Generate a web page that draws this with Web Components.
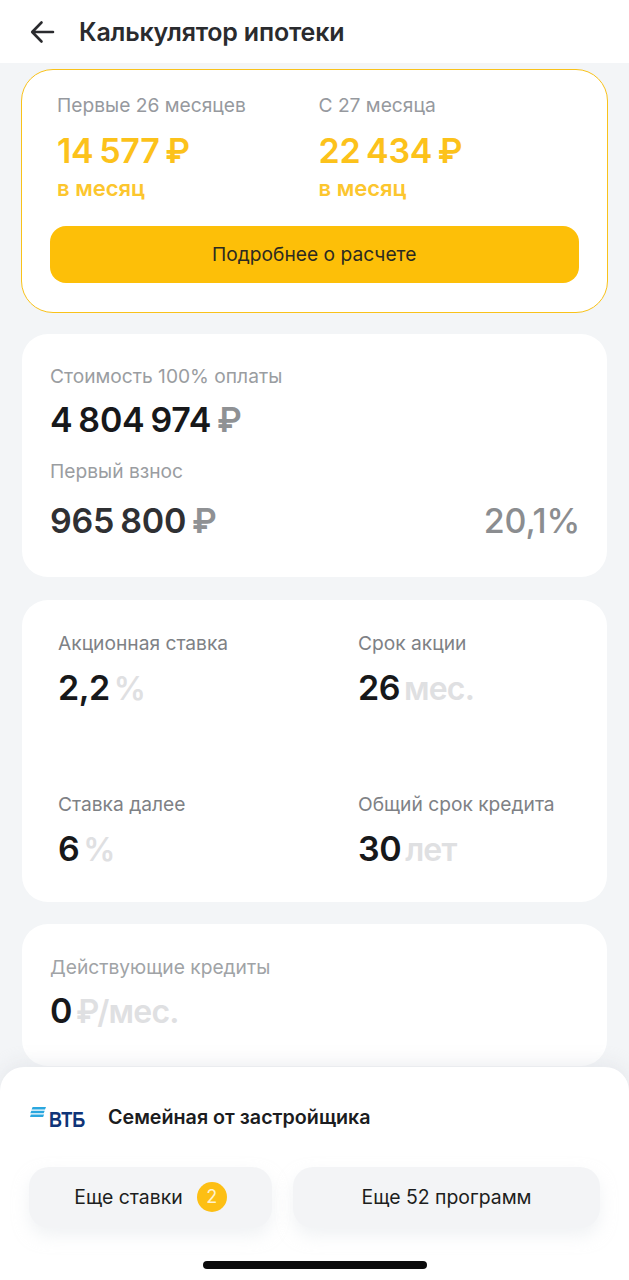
<!DOCTYPE html>
<html lang="ru">
<head>
<meta charset="utf-8">
<title>Калькулятор ипотеки</title>
<style>
	html, body { margin: 0; padding: 0; }
	body { width: 629px; height: 1280px; overflow: hidden; background: #f3f5f7; font-family: Inter, "Noto Sans", sans-serif; color: #1b1c1e; }
</style>
</head>
<body>
<mortgage-page>
	<app-bar>Калькулятор ипотеки</app-bar>
	<main-list>
		<payment-card></payment-card>
		<cost-card></cost-card>
		<info-card style="height:302px; margin-top:23px">
			<stat-item label="Акционная ставка" value="2,2" unit="%"></stat-item>
			<stat-item label="Срок акции" value="26" unit="мес."></stat-item>
			<stat-item label="Ставка далее" value="6" unit="%"></stat-item>
			<stat-item label="Общий срок кредита" value="30" unit="лет"></stat-item>
		</info-card>
		<credit-card></credit-card>
	</main-list>
	<bottom-sheet></bottom-sheet>
</mortgage-page>

<script>
// Small helper so every element gets an open shadow root with its own styles
function define(name, css, html) {
	customElements.define(name, class extends HTMLElement {
		constructor() {
			super();
			this.attachShadow({ mode: 'open' });
			let render = typeof html === 'function' ? html(this) : html;
			this.shadowRoot.innerHTML = `<style>${css}</style>${render}`;
		}
	});
}

define('mortgage-page', `
	:host { display: block; position: relative; width: 629px; height: 1280px; overflow: hidden; }
`, `<slot></slot>`);

define('app-bar', `
	:host { display: flex; align-items: center; height: 63px; background: #fff; box-sizing: border-box; padding: 0 0 0 30px; }
	svg { width: 25px; height: 24px; margin-right: 24px; flex: none; }
	span { font-size: 25px; font-weight: 600; color: #2a2b2e; letter-spacing: -0.2px; }
`, `
	<svg viewBox="0 0 25 24" fill="none" stroke="#2a2b2e" stroke-width="2.6" stroke-linecap="round" stroke-linejoin="round">
		<path d="M23 12H2.5M11.5 2.5 2.2 12l9.3 9.5"/>
	</svg>
	<span><slot></slot></span>
`);

define('main-list', `
	:host { display: block; padding: 5px 22px 0 21px; }
`, `<slot></slot>`);

define('payment-column', `
	:host { display: block; font-family: Inter, "Noto Sans", sans-serif; }
	.label { font-size: 19.2px; line-height: 24px; color: #96999e; }
	.sum { font-size: 34px; line-height: 40px; font-weight: 600; color: #fcc21b; margin-top: 14px; letter-spacing: -0.3px; word-spacing: -2.5px; }
	.per { font-size: 22px; line-height: 26px; font-weight: 600; color: #fcc62e; margin-top: 4px; }
`, (el) => `
	<div class="label">${el.getAttribute('label')}</div>
	<div class="sum">${el.getAttribute('sum')} ₽</div>
	<div class="per">в месяц</div>
`);

define('payment-card', `
	:host { display: block; height: 244px; box-sizing: border-box; margin-top: 1px; margin-right: -1px; background: #fff; border: 1.5px solid #f9c21a; border-radius: 32px; padding: 22.5px 28.5px 0 28px; }
	.cols { display: grid; grid-template-columns: 261.500px 1fr; padding-left: 7px; }
	button { display: block; width: 100%; height: 57px; margin-top: 25px; border: 0; border-radius: 16px; background: #fdbf08; font: 400 19.2px Inter, "Noto Sans", sans-serif; color: #2c2a20; padding: 0; }
`, `
	<div class="cols">
		<payment-column label="Первые 26 месяцев" sum="14 577"></payment-column>
		<payment-column label="С 27 месяца" sum="22 434"></payment-column>
	</div>
	<button>Подробнее о расчете</button>
`);

define('cost-card', `
	:host { display: block; height: 243px; margin-top: 21px; margin-left: 1px; box-sizing: border-box; background: #fff; border-radius: 26px; padding: 30px 27px 0 28px; }
	.label { font-size: 19.2px; line-height: 24px; color: #9a9da1; }
	.big { font-size: 34px; line-height: 40px; font-weight: 600; color: #17181a; margin-top: 12px; letter-spacing: -0.2px; word-spacing: -2.5px; }
	.big.second { color: #2f3033; margin-top: 18px; }
	.row { display: flex; justify-content: space-between; }
	.r { color: #8f9194; }
	.big.pct { color: #8b8d90; font-weight: 500; }
	.label.second { margin-top: 19px; }
`, `
	<div class="label">Стоимость 100% оплаты</div>
	<div class="big">4 804 974 <span class="r">₽</span></div>
	<div class="label second">Первый взнос</div>
	<div class="row">
		<div class="big second">965 800 <span class="r">₽</span></div>
		<div class="big second pct">20,1%</div>
	</div>
`);

define('info-card', `
	:host { display: grid; grid-template-columns: 300px 1fr; grid-auto-rows: 161px; margin-left: 1px; box-sizing: border-box; background: #fff; border-radius: 26px; padding: 31px 0 0 36px; }
`, `<slot></slot>`);

define('stat-item', `
	:host { display: block; }
	.label { font-size: 19.2px; line-height: 24px; color: #7e8185; }
	.val { font-size: 34px; line-height: 40px; font-weight: 600; color: #17181a; margin-top: 13px; letter-spacing: -0.5px; word-spacing: -4px; }
	.unit { font-size: 32px; color: #dfe0e2; letter-spacing: -0.8px; }
`, (el) => `
	<div class="label">${el.getAttribute('label')}</div>
	<div class="val">${el.getAttribute('value')} <span class="unit">${el.getAttribute('unit')}</span></div>
`);

define('credit-card', `
	:host { display: block; height: 142px; margin-top: 22px; margin-left: 1px; box-sizing: border-box; background: #fff; border-radius: 26px; padding: 31px 0 0 28px; }
	.label { font-size: 19.2px; line-height: 24px; color: #a0a3a6; }
	.val { font-size: 34px; line-height: 40px; font-weight: 600; color: #17181a; margin-top: 12px; letter-spacing: -0.5px; word-spacing: -4px; }
	.unit { font-size: 32px; color: #dfe0e2; letter-spacing: -0.8px; }
`, `
	<div class="label">Действующие кредиты</div>
	<div class="val">0 <span class="unit">₽/мес.</span></div>
`);

define('sheet-button', `
	:host { display: flex; align-items: center; justify-content: center; height: 61px; box-sizing: border-box; padding-bottom: 2px; border-radius: 20px; background: #f3f4f6; box-shadow: 0 8px 16px rgba(228, 231, 235, .5); font-size: 19.4px; color: #1d1e20; }
`, `<slot></slot>`);

define('count-badge', `
	:host { display: flex; align-items: center; justify-content: center; width: 30px; height: 30px; margin-left: 14px; border-radius: 50%; background: #fdbf14; color: #fff3cf; font-size: 18px; }
`, `<slot></slot>`);

define('bottom-sheet', `
	:host { display: block; position: absolute; left: 0; right: 0; bottom: 0; height: 213px; box-sizing: border-box; background: #fff; border-radius: 24px 24px 0 0; box-shadow: 0 -4px 18px rgba(214, 218, 224, .45); padding: 0 29px; }
	.title { display: flex; align-items: center; height: 100px; }
	.logo { width: 56px; height: 26px; margin-right: 23px; flex: none; display: flex; }
	.logo svg { width: 17px; height: 26px; flex: none; margin-left: 1px; }
	.logo b { font: 700 22px/20px "Liberation Sans", sans-serif; color: #0f3478; align-self: flex-end; transform: scaleX(.82); transform-origin: 0 50%; margin-left: 2px; }
	.name { font-size: 19.7px; font-weight: 600; color: #1b1c20; }
	.buttons { display: grid; grid-template-columns: 243px 307px; gap: 21px; }
	.home { position: absolute; left: 203px; bottom: 11px; width: 224px; height: 8px; border-radius: 4px; background: #0b0b0c; }
`, `
	<div class="title">
		<div class="logo">
			<svg viewBox="0 0 17 26">
				<path fill="#2aa7df" d="M2.600 3h13.400l-1 2.500H1.600zM1.300 6.800h13.400l-1 2.500H.3zM.8 10.500h13.300l-1 2.500H0z"/>
			</svg>
			<b>ВТБ</b>
		</div>
		<div class="name">Семейная от застройщика</div>
	</div>
	<div class="buttons">
		<sheet-button>Еще ставки <count-badge>2</count-badge></sheet-button>
		<sheet-button>Еще 52 программ</sheet-button>
	</div>
	<div class="home"></div>
`);
</script>
</body>
</html>
